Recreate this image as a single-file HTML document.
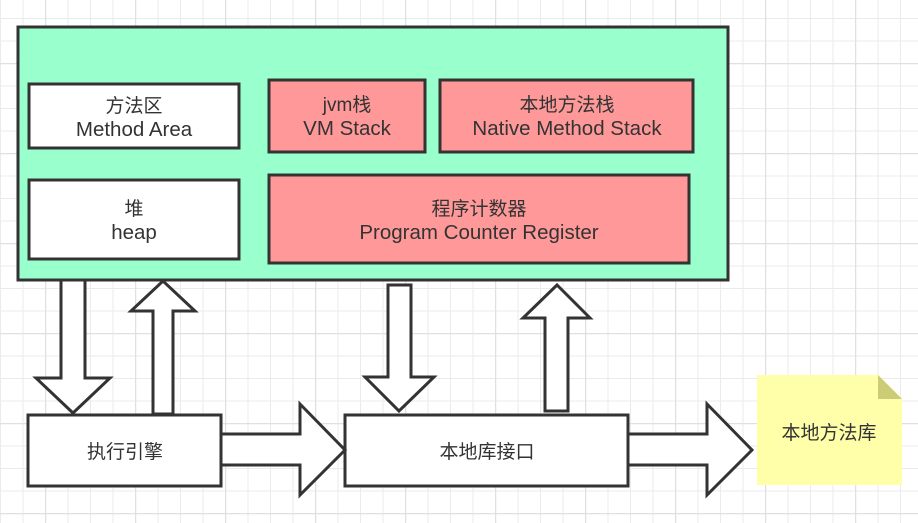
<!DOCTYPE html>
<html><head><meta charset="utf-8"><style>
html,body{margin:0;padding:0;background:#fff;}
svg{display:block}
text{font-family:"Liberation Sans","Noto Sans CJK SC",sans-serif;font-size:19px;fill:#333;text-anchor:middle;}
text.l{font-size:20.5px;}
</style></head><body>
<svg width="918" height="523" viewBox="0 0 918 523" xmlns="http://www.w3.org/2000/svg">
<defs>
<pattern id="g1" width="22.5" height="22.5" patternUnits="userSpaceOnUse" x="0" y="18">
<path d="M0 0.5H22.5M0.5 0V22.5" stroke="#ebebeb" stroke-width="1" fill="none"/>
</pattern>
<pattern id="g2" width="90" height="90" patternUnits="userSpaceOnUse" x="45" y="63">
<path d="M0 0.5H90M0.5 0V90" stroke="#e0e0e0" stroke-width="1.5" fill="none"/>
</pattern>
</defs>
<rect width="918" height="523" fill="url(#g1)"/>
<rect width="918" height="523" fill="url(#g2)"/>
<g stroke="#333" stroke-width="3" stroke-linejoin="miter">
<rect x="18" y="27" width="710" height="253" fill="#99FFCC"/>
<rect x="29" y="84" width="210" height="64" fill="#fff"/>
<rect x="29" y="180" width="210" height="79" fill="#fff"/>
<rect x="269" y="80" width="156" height="72" fill="#FF9999"/>
<rect x="440" y="80" width="253" height="72" fill="#FF9999"/>
<rect x="269" y="175" width="420" height="88" fill="#FF9999"/>
<polygon points="61,280 85,280 85,378 110,378 73,413 36,378 61,378" fill="#fff"/>
<polygon points="153,414 173,414 173,311 195,311 163,281 131,311 153,311" fill="#fff"/>
<polygon points="388,285 411,285 411,377 434,377 399,411 365,377 388,377" fill="#fff"/>
<polygon points="545,411 568,411 568,318 590,318 557,285 523,318 545,318" fill="#fff"/>
<rect x="28" y="415" width="193" height="71" fill="#fff"/>
<rect x="345" y="415" width="283" height="71" fill="#fff"/>
<polygon points="221,434 300,434 300,404 345,450 300,495 300,465 221,465" fill="#fff"/>
<polygon points="628,434 707,434 707,404 752,450 707,495 707,465 628,465" fill="#fff"/>
</g>
<polygon points="757,375 878,375 902,399 902,485 757,485" fill="#FFFFAA"/>
<polygon points="878,375 902,399 878,399" fill="#CCCC77"/>
<text x="134" y="112">方法区</text><text class="l" x="134" y="136">Method Area</text>
<text x="134" y="215">堆</text><text class="l" x="134" y="239">heap</text>
<text x="347" y="111">jvm栈</text><text class="l" x="347" y="135">VM Stack</text>
<text x="567" y="111">本地方法栈</text><text class="l" x="567" y="135">Native Method Stack</text>
<text x="479" y="215">程序计数器</text><text class="l" x="479" y="239">Program Counter Register</text>
<text x="125" y="458">执行引擎</text>
<text x="487" y="458">本地库接口</text>
<text x="829" y="439">本地方法库</text>
</svg>
</body></html>
